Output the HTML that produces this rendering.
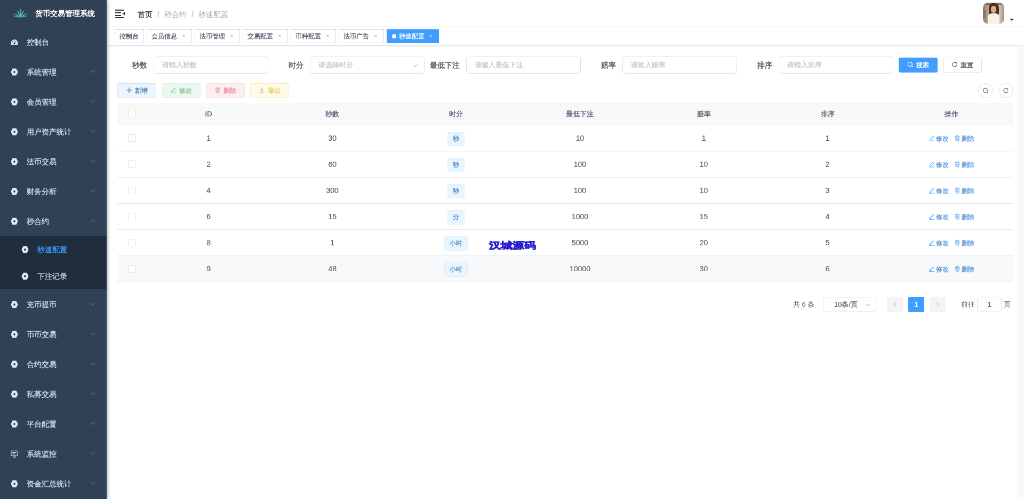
<!DOCTYPE html>
<html><head><meta charset="utf-8">
<style>
*{box-sizing:border-box;margin:0;padding:0}
html,body{width:1024px;height:499px;overflow:hidden;background:#fff}
body{font-family:"Liberation Sans",sans-serif;color:#606266}
#root{position:absolute;left:0;top:0;width:1920px;height:936px;transform:scale(0.533333);transform-origin:0 0;background:#fff;overflow:hidden;will-change:transform}
.abs{position:absolute}
/* sidebar */
#side{position:absolute;left:0;top:0;width:200px;height:936px;background:#304156;box-shadow:2px 0 6px rgba(0,21,41,.35);z-index:5}
.logo{position:absolute;left:0;top:0;width:200px;height:50px}
.logo svg{position:absolute;left:22px;top:9px}
.logo .t{position:absolute;left:66px;top:0;line-height:50px;font-size:14px;font-weight:bold;color:#fff;white-space:nowrap}
.mi{position:absolute;left:0;width:200px;height:56px;line-height:56px;font-size:14px;color:#bfcbd9;white-space:nowrap}
.mi .ic{position:absolute;left:20px;top:21.5px;width:14px;height:14px}
.mi .tx{position:absolute;left:50px;top:1px;color:#d0d8e2;-webkit-text-stroke:0.4px #d0d8e2}
.mi .ar{position:absolute;left:168px;top:22px;width:12px;height:12px}
.sub{position:absolute;left:0;width:200px;height:100px;background:#1f2d3d}
.si{position:absolute;left:0;width:200px;height:50px;line-height:50px;font-size:14px;color:#bfcbd9;white-space:nowrap}
.si .ic{position:absolute;left:40px;top:18.5px;width:14px;height:14px}
.si .tx{position:absolute;left:70px;top:1px;-webkit-text-stroke:0.35px currentColor}
/* navbar */
#nav{position:absolute;left:200px;top:0;width:1720px;height:51px;background:#fff;box-shadow:0 1px 4px rgba(0,21,41,.08);border-bottom:1px solid #f0f1f3}
.bc{position:absolute;left:58px;top:1.5px;line-height:50px;font-size:14px;white-space:nowrap}
.bc b{color:#303133;font-weight:normal;-webkit-text-stroke:0.15px #303133}
.bc .sep{color:#c0c4cc;margin:0 9px;font-weight:bold}
.bc .nr{color:#a0abba}
#tags{position:absolute;left:200px;top:51px;width:1720px;height:34px;background:#fff;border-bottom:1px solid #d8dce5;box-shadow:0 1px 3px 0 rgba(0,0,0,.12),0 0 3px 0 rgba(0,0,0,.04)}
.tag{position:absolute;top:4px;height:26px;line-height:24px;border:1px solid #d8dce5;color:#495060;background:#fff;padding:0 0 0 8px;font-size:12px;white-space:nowrap;-webkit-text-stroke:0.2px currentColor}
.tag .x{position:absolute;right:7px;top:0;width:16px;text-align:center;color:#a8abb2;font-size:8px;-webkit-text-stroke:0}
.tag.act{background:#409eff;color:#fff;border-color:#409eff}
.tag.act .dot{display:inline-block;width:8px;height:8px;border-radius:50%;background:#fff;margin-left:1px;margin-right:5px;position:relative;top:0px}
.tag.act .x{color:#d8ebff}
/* form */
.lbl{position:absolute;height:32px;line-height:32px;font-size:14px;color:#606266;font-weight:bold;text-align:right;white-space:nowrap}
.inp{position:absolute;height:32px;border:1px solid #dcdfe6;border-radius:4px;background:#fff;font-size:13px;line-height:30px;padding-left:15px;color:#c0c4cc;white-space:nowrap;-webkit-text-stroke:0.25px currentColor}
.btn{position:absolute;height:28px;border-radius:3px;font-size:12px;line-height:26px;text-align:center;white-space:nowrap;border:1px solid #dcdfe6;-webkit-text-stroke:0.3px currentColor}
/* table */
.th{position:absolute;top:193px;left:220px;width:1680px;height:42px;background:#f8f8f9;border-bottom:1px solid #e5eaef}
.row{position:absolute;left:220px;width:1680px;height:49px;border-bottom:1px solid #e5eaef}
.c{position:absolute;top:0;text-align:center;white-space:nowrap}
.th .c{line-height:41px;font-size:13px;color:#515a6e;font-weight:normal;-webkit-text-stroke:0.3px #515a6e}
.row .c{line-height:48px;font-size:14px;color:#606266;-webkit-text-stroke:0.2px #606266}
.cb{position:absolute;left:20px;width:14px;height:14px;border:1px solid #dcdfe6;border-radius:2px;background:#fff}
.etag{display:inline-block;height:27px;line-height:25px;padding:0 9px;font-size:12px;color:#4d88c0;background:#e9f4fd;border:1px solid #def0fc;border-radius:4px;vertical-align:middle;-webkit-text-stroke:0.3px #4d88c0}
.op{font-size:12px;color:#4f92d6;-webkit-text-stroke:0.25px #4f92d6}
</style></head><body>
<div id="root">
<!-- SIDEBAR -->
<div id="side">
  <div class="logo">
    <svg width="32" height="32" viewBox="0 0 32 32"><path fill="#50b8a2" d="M16.0 23.5 Q19.0 16.0 16.8 6.5 Q13.8 15.7 16.0 23.5Z M16.0 23.5 Q15.4 16.3 10.0 9.5 Q11.2 18.1 16.0 23.5Z M16.0 23.5 Q21.2 18.5 23.0 10.0 Q17.1 16.4 16.0 23.5Z M16.0 23.5 Q11.2 18.2 3.0 15.5 Q9.1 21.6 16.0 23.5Z M16.0 23.5 Q23.1 21.6 29.5 15.5 Q21.1 18.2 16.0 23.5Z M16.0 23.5 Q9.5 20.6 0.8 20.5 Q8.9 23.7 16.0 23.5Z M16.0 23.5 Q23.1 23.7 31.2 20.5 Q22.5 20.6 16.0 23.5Z"/></svg>
    <div class="t">货币交易管理系统</div>
  </div>
  <div id="menu"><div class="mi" style="top:50px"><svg class="ic" viewBox="0 0 14 14"><path fill="#d6dee9" d="M7 2 A6.5 6.5 0 0 0 0.5 8.5 L0.5 12 L13.5 12 L13.5 8.5 A6.5 6.5 0 0 0 7 2Z"/><circle cx="7" cy="10" r="1.4" fill="#304156"/><path stroke="#304156" stroke-width="1.2" d="M7 10 L9 5.5 M3 6 L4 7 M7 3.5 L7 5"/></svg><span class="tx">控制台</span></div><div class="mi" style="top:106px"><svg class="ic" viewBox="0 0 14 14"><path fill="#e6e9ee" fill-rule="evenodd" d="M0.4 7 L3.6 0.6 L10.4 0.6 L13.6 7 L10.4 13.4 L3.6 13.4Z M7 5.1 A1.9 1.9 0 1 0 7 8.9 A1.9 1.9 0 1 0 7 5.1Z"/></svg><span class="tx">系统管理</span><svg class="ar" viewBox="0 0 12 12"><path d="M2 4 L6 8 L10 4" fill="none" stroke="#5f6f86" stroke-width="1.1"/></svg></div><div class="mi" style="top:162px"><svg class="ic" viewBox="0 0 14 14"><path fill="#e6e9ee" fill-rule="evenodd" d="M0.4 7 L3.6 0.6 L10.4 0.6 L13.6 7 L10.4 13.4 L3.6 13.4Z M7 5.1 A1.9 1.9 0 1 0 7 8.9 A1.9 1.9 0 1 0 7 5.1Z"/></svg><span class="tx">会员管理</span><svg class="ar" viewBox="0 0 12 12"><path d="M2 4 L6 8 L10 4" fill="none" stroke="#5f6f86" stroke-width="1.1"/></svg></div><div class="mi" style="top:218px"><svg class="ic" viewBox="0 0 14 14"><path fill="#e6e9ee" fill-rule="evenodd" d="M0.4 7 L3.6 0.6 L10.4 0.6 L13.6 7 L10.4 13.4 L3.6 13.4Z M7 5.1 A1.9 1.9 0 1 0 7 8.9 A1.9 1.9 0 1 0 7 5.1Z"/></svg><span class="tx">用户资产统计</span><svg class="ar" viewBox="0 0 12 12"><path d="M2 4 L6 8 L10 4" fill="none" stroke="#5f6f86" stroke-width="1.1"/></svg></div><div class="mi" style="top:274px"><svg class="ic" viewBox="0 0 14 14"><path fill="#e6e9ee" fill-rule="evenodd" d="M0.4 7 L3.6 0.6 L10.4 0.6 L13.6 7 L10.4 13.4 L3.6 13.4Z M7 5.1 A1.9 1.9 0 1 0 7 8.9 A1.9 1.9 0 1 0 7 5.1Z"/></svg><span class="tx">法币交易</span><svg class="ar" viewBox="0 0 12 12"><path d="M2 4 L6 8 L10 4" fill="none" stroke="#5f6f86" stroke-width="1.1"/></svg></div><div class="mi" style="top:330px"><svg class="ic" viewBox="0 0 14 14"><path fill="#e6e9ee" fill-rule="evenodd" d="M0.4 7 L3.6 0.6 L10.4 0.6 L13.6 7 L10.4 13.4 L3.6 13.4Z M7 5.1 A1.9 1.9 0 1 0 7 8.9 A1.9 1.9 0 1 0 7 5.1Z"/></svg><span class="tx">财务分析</span><svg class="ar" viewBox="0 0 12 12"><path d="M2 4 L6 8 L10 4" fill="none" stroke="#5f6f86" stroke-width="1.1"/></svg></div><div class="mi" style="top:386px"><svg class="ic" viewBox="0 0 14 14"><path fill="#e6e9ee" fill-rule="evenodd" d="M0.4 7 L3.6 0.6 L10.4 0.6 L13.6 7 L10.4 13.4 L3.6 13.4Z M7 5.1 A1.9 1.9 0 1 0 7 8.9 A1.9 1.9 0 1 0 7 5.1Z"/></svg><span class="tx">秒合约</span><svg class="ar" viewBox="0 0 12 12"><path d="M2 8 L6 4 L10 8" fill="none" stroke="#5f6f86" stroke-width="1.1"/></svg></div><div class="sub" style="top:442px"><div class="si" style="top:0"><svg class="ic" viewBox="0 0 14 14"><path fill="#e6e9ee" fill-rule="evenodd" d="M0.4 7 L3.6 0.6 L10.4 0.6 L13.6 7 L10.4 13.4 L3.6 13.4Z M7 5.1 A1.9 1.9 0 1 0 7 8.9 A1.9 1.9 0 1 0 7 5.1Z"/></svg><span class="tx" style="color:#409eff">秒速配置</span></div><div class="si" style="top:50px"><svg class="ic" viewBox="0 0 14 14"><path fill="#e6e9ee" fill-rule="evenodd" d="M0.4 7 L3.6 0.6 L10.4 0.6 L13.6 7 L10.4 13.4 L3.6 13.4Z M7 5.1 A1.9 1.9 0 1 0 7 8.9 A1.9 1.9 0 1 0 7 5.1Z"/></svg><span class="tx">下注记录</span></div></div><div class="mi" style="top:542px"><svg class="ic" viewBox="0 0 14 14"><path fill="#e6e9ee" fill-rule="evenodd" d="M0.4 7 L3.6 0.6 L10.4 0.6 L13.6 7 L10.4 13.4 L3.6 13.4Z M7 5.1 A1.9 1.9 0 1 0 7 8.9 A1.9 1.9 0 1 0 7 5.1Z"/></svg><span class="tx">充币提币</span><svg class="ar" viewBox="0 0 12 12"><path d="M2 4 L6 8 L10 4" fill="none" stroke="#5f6f86" stroke-width="1.1"/></svg></div><div class="mi" style="top:598px"><svg class="ic" viewBox="0 0 14 14"><path fill="#e6e9ee" fill-rule="evenodd" d="M0.4 7 L3.6 0.6 L10.4 0.6 L13.6 7 L10.4 13.4 L3.6 13.4Z M7 5.1 A1.9 1.9 0 1 0 7 8.9 A1.9 1.9 0 1 0 7 5.1Z"/></svg><span class="tx">币币交易</span><svg class="ar" viewBox="0 0 12 12"><path d="M2 4 L6 8 L10 4" fill="none" stroke="#5f6f86" stroke-width="1.1"/></svg></div><div class="mi" style="top:654px"><svg class="ic" viewBox="0 0 14 14"><path fill="#e6e9ee" fill-rule="evenodd" d="M0.4 7 L3.6 0.6 L10.4 0.6 L13.6 7 L10.4 13.4 L3.6 13.4Z M7 5.1 A1.9 1.9 0 1 0 7 8.9 A1.9 1.9 0 1 0 7 5.1Z"/></svg><span class="tx">合约交易</span><svg class="ar" viewBox="0 0 12 12"><path d="M2 4 L6 8 L10 4" fill="none" stroke="#5f6f86" stroke-width="1.1"/></svg></div><div class="mi" style="top:710px"><svg class="ic" viewBox="0 0 14 14"><path fill="#e6e9ee" fill-rule="evenodd" d="M0.4 7 L3.6 0.6 L10.4 0.6 L13.6 7 L10.4 13.4 L3.6 13.4Z M7 5.1 A1.9 1.9 0 1 0 7 8.9 A1.9 1.9 0 1 0 7 5.1Z"/></svg><span class="tx">私募交易</span><svg class="ar" viewBox="0 0 12 12"><path d="M2 4 L6 8 L10 4" fill="none" stroke="#5f6f86" stroke-width="1.1"/></svg></div><div class="mi" style="top:766px"><svg class="ic" viewBox="0 0 14 14"><path fill="#e6e9ee" fill-rule="evenodd" d="M0.4 7 L3.6 0.6 L10.4 0.6 L13.6 7 L10.4 13.4 L3.6 13.4Z M7 5.1 A1.9 1.9 0 1 0 7 8.9 A1.9 1.9 0 1 0 7 5.1Z"/></svg><span class="tx">平台配置</span><svg class="ar" viewBox="0 0 12 12"><path d="M2 4 L6 8 L10 4" fill="none" stroke="#5f6f86" stroke-width="1.1"/></svg></div><div class="mi" style="top:822px"><svg class="ic" viewBox="0 0 14 14"><g fill="none" stroke="#bfcbd9" stroke-width="1.3"><rect x="1" y="1.5" width="12" height="8.5"/><path d="M4 13 L10 13 M7 10 L7 13 M3.5 4.5 L10.5 4.5 M3.5 7 L8 7"/></g></svg><span class="tx">系统监控</span><svg class="ar" viewBox="0 0 12 12"><path d="M2 4 L6 8 L10 4" fill="none" stroke="#5f6f86" stroke-width="1.1"/></svg></div><div class="mi" style="top:878px"><svg class="ic" viewBox="0 0 14 14"><path fill="#e6e9ee" fill-rule="evenodd" d="M0.4 7 L3.6 0.6 L10.4 0.6 L13.6 7 L10.4 13.4 L3.6 13.4Z M7 5.1 A1.9 1.9 0 1 0 7 8.9 A1.9 1.9 0 1 0 7 5.1Z"/></svg><span class="tx">资金汇总统计</span><svg class="ar" viewBox="0 0 12 12"><path d="M2 4 L6 8 L10 4" fill="none" stroke="#5f6f86" stroke-width="1.1"/></svg></div></div>
</div>
<!-- NAVBAR -->
<div id="nav">
  <svg class="abs" style="left:15px;top:15px" width="20" height="20" viewBox="0 0 20 20"><g fill="#303133"><rect x="1" y="3" width="16" height="2"/><rect x="1" y="8" width="11" height="2"/><rect x="1" y="13" width="11" height="2"/><rect x="1" y="17" width="16" height="2"/><path d="M19 7.5 L14.5 10.5 L19 13.5Z"/></g></svg>
  <div class="bc"><b>首页</b><span class="sep">/</span><span class="nr">秒合约</span><span class="sep">/</span><span class="nr">秒速配置</span></div>
  <div class="abs" style="left:1643px;top:5px;width:40px;height:40px;border-radius:10px;overflow:hidden;background:linear-gradient(90deg,#8c7b66 0%,#b3a38e 22%,#e9dfd2 50%,#ddd3c6 72%,#9d9282 100%)">
    <div class="abs" style="left:0;top:0;width:40px;height:4px;background:#6d5b48;opacity:.7"></div>
    <div class="abs" style="left:11px;top:1px;width:19px;height:23px;border-radius:8px 8px 4px 4px;background:#4d2f1c"></div>
    <div class="abs" style="left:15px;top:6px;width:10px;height:13px;border-radius:5px;background:#d9ad90"></div>
    <div class="abs" style="left:9px;top:20px;width:22px;height:22px;border-radius:8px 8px 0 0;background:#f7f1e8"></div>
    <div class="abs" style="left:0;top:14px;width:6px;height:14px;background:#7a6a58;opacity:.6"></div>
  </div>
  <div class="abs" style="left:1693px;top:35px;width:0;height:0;border-left:4px solid transparent;border-right:4px solid transparent;border-top:4.5px solid #303133"></div>
</div>
<!-- TAGS -->
<div id="tags">
  <div class="tag" style="left:15px;width:55px">控制台</div>
  <div class="tag" style="left:75px;width:85px">会员信息<span class="x">✕</span></div>
  <div class="tag" style="left:165px;width:85px">法币管理<span class="x">✕</span></div>
  <div class="tag" style="left:255px;width:85px">交易配置<span class="x">✕</span></div>
  <div class="tag" style="left:345px;width:85px">币种配置<span class="x">✕</span></div>
  <div class="tag" style="left:435px;width:85px">法币广告<span class="x">✕</span></div>
  <div class="tag act" style="left:525px;width:98px"><span class="dot"></span>秒速配置<span class="x">✕</span></div>
</div>
<!-- FORM -->
<div class="lbl" style="left:220px;top:106px;width:56px">秒数</div><div class="inp" style="left:288px;top:106px;width:215px">请输入秒数</div><div class="lbl" style="left:513px;top:106px;width:56px">时分</div><div class="inp" style="left:581px;top:106px;width:215px">请选择时分<svg class="abs" style="right:10px;top:10px" width="12" height="12" viewBox="0 0 12 12"><path d="M2 4 L6 8 L10 4" fill="none" stroke="#c0c4cc" stroke-width="1.2"/></svg></div><div class="lbl" style="left:806px;top:106px;width:56px">最低下注</div><div class="inp" style="left:874px;top:106px;width:215px">请输入最低下注</div><div class="lbl" style="left:1099px;top:106px;width:56px">赔率</div><div class="inp" style="left:1167px;top:106px;width:215px">请输入赔率</div><div class="lbl" style="left:1392px;top:106px;width:56px">排序</div><div class="inp" style="left:1460px;top:106px;width:215px">请输入排序</div><div class="btn" style="left:1685px;top:108px;width:73px;background:#409eff;border-color:#409eff;color:#fff"><svg width="12" height="12" viewBox="0 0 12 12" style="vertical-align:-1px;margin-right:5px"><circle cx="5.3" cy="5.3" r="4" fill="none" stroke="#fff" stroke-width="1.3"/><path d="M8.2 8.2 L11 11" stroke="#fff" stroke-width="1.3"/></svg>搜索</div><div class="btn" style="left:1768px;top:108px;width:73px;background:#fff;color:#606266"><svg width="12" height="12" viewBox="0 0 12 12" style="vertical-align:-1px;margin-right:5px"><path d="M10 6 A4 4 0 1 1 8.5 2.9" fill="none" stroke="#606266" stroke-width="1.3"/><path d="M7 1.2 L10.2 2 L9.4 5.2Z" fill="#606266"/></svg>重置</div><div class="btn" style="left:220px;top:156px;width:73px;background:#ecf5ff;border-color:#cfe3f5;color:#3d7db0"><svg width="12" height="12" viewBox="0 0 12 12" style="vertical-align:-1px;margin-right:5px"><path d="M6 1 L6 11 M1 6 L11 6" stroke="#556677" stroke-width="1.1"/></svg>新增</div><div class="btn" style="left:303px;top:156px;width:73px;background:#ebf8ef;border-color:#dcf1e3;color:#86c79b"><svg width="12" height="12" viewBox="0 0 12 12" style="vertical-align:-1px;margin-right:5px"><path d="M2 10 L2.5 8 L8.5 2 L10 3.5 L4 9.5Z M1 11.2 L11 11.2" fill="none" stroke="#86c79b" stroke-width="1"/></svg>修改</div><div class="btn" style="left:386px;top:156px;width:73px;background:#fdeeef;border-color:#f9dfe2;color:#e98a96"><svg width="12" height="12" viewBox="0 0 12 12" style="vertical-align:-1px;margin-right:5px"><path d="M1.5 3 L10.5 3 M4.5 3 L4.5 1.3 L7.5 1.3 L7.5 3 M2.8 3 L3.3 11 L8.7 11 L9.2 3 M5 5 L5 9 M7 5 L7 9" fill="none" stroke="#e98a96" stroke-width="1"/></svg>删除</div><div class="btn" style="left:469px;top:156px;width:73px;background:#fefae9;border-color:#f6ebc8;color:#e2c23a"><svg width="12" height="12" viewBox="0 0 12 12" style="vertical-align:-1px;margin-right:5px"><path d="M6 1 L6 8 M3 5 L6 8 L9 5 M1.5 11 L10.5 11" fill="none" stroke="#c9b97a" stroke-width="1.1"/></svg>导出</div><div class="btn" style="left:1834px;top:156px;width:28px;border-radius:50%;background:#fff"><svg width="12" height="12" viewBox="0 0 12 12" style="position:absolute;left:7px;top:7px"><circle cx="5.3" cy="5.3" r="4" fill="none" stroke="#606266" stroke-width="1.2"/><path d="M8.2 8.2 L11 11" stroke="#606266" stroke-width="1.2"/></svg></div><div class="btn" style="left:1872px;top:156px;width:28px;border-radius:50%;background:#fff"><svg width="12" height="12" viewBox="0 0 12 12" style="position:absolute;left:7px;top:7px"><path d="M10 6 A4 4 0 1 1 8.5 2.9" fill="none" stroke="#606266" stroke-width="1.2"/><path d="M7 1.2 L10.2 2 L9.4 5.2Z" fill="#606266"/></svg></div>
<!-- TABLE -->
<div class="th"><div class="cb" style="top:13px"></div><div class="c" style="left:55.00px;width:232.14px">ID</div><div class="c" style="left:287.14px;width:232.14px">秒数</div><div class="c" style="left:519.29px;width:232.14px">时分</div><div class="c" style="left:751.43px;width:232.14px">最低下注</div><div class="c" style="left:983.57px;width:232.14px">赔率</div><div class="c" style="left:1215.71px;width:232.14px">排序</div><div class="c" style="left:1447.86px;width:232.14px">操作</div></div>
<div class="row" style="top:235px;background:#fff"><div class="cb" style="top:17px"></div><div class="c" style="left:55.00px;width:232.14px">1</div><div class="c" style="left:287.14px;width:232.14px">30</div><div class="c" style="left:519.29px;width:232.14px"><span class="etag">秒</span></div><div class="c" style="left:751.43px;width:232.14px">10</div><div class="c" style="left:983.57px;width:232.14px">1</div><div class="c" style="left:1215.71px;width:232.14px">1</div><div class="c" style="left:1447.86px;width:232.14px"><span class="op"><svg width="12" height="12" viewBox="0 0 12 12" style="vertical-align:-1px;margin-right:2px"><path d="M2 10 L2.5 8 L8.5 2 L10 3.5 L4 9.5Z M1 11.2 L11 11.2" fill="none" stroke="#409eff" stroke-width="1"/></svg>修改</span><span class="op" style="margin-left:10px"><svg width="12" height="12" viewBox="0 0 12 12" style="vertical-align:-1px;margin-right:2px"><path d="M1.5 3 L10.5 3 M4.5 3 L4.5 1.3 L7.5 1.3 L7.5 3 M2.8 3 L3.3 11 L8.7 11 L9.2 3 M5 5 L5 9 M7 5 L7 9" fill="none" stroke="#409eff" stroke-width="1"/></svg>删除</span></div></div><div class="row" style="top:284px;background:#fff"><div class="cb" style="top:17px"></div><div class="c" style="left:55.00px;width:232.14px">2</div><div class="c" style="left:287.14px;width:232.14px">60</div><div class="c" style="left:519.29px;width:232.14px"><span class="etag">秒</span></div><div class="c" style="left:751.43px;width:232.14px">100</div><div class="c" style="left:983.57px;width:232.14px">10</div><div class="c" style="left:1215.71px;width:232.14px">2</div><div class="c" style="left:1447.86px;width:232.14px"><span class="op"><svg width="12" height="12" viewBox="0 0 12 12" style="vertical-align:-1px;margin-right:2px"><path d="M2 10 L2.5 8 L8.5 2 L10 3.5 L4 9.5Z M1 11.2 L11 11.2" fill="none" stroke="#409eff" stroke-width="1"/></svg>修改</span><span class="op" style="margin-left:10px"><svg width="12" height="12" viewBox="0 0 12 12" style="vertical-align:-1px;margin-right:2px"><path d="M1.5 3 L10.5 3 M4.5 3 L4.5 1.3 L7.5 1.3 L7.5 3 M2.8 3 L3.3 11 L8.7 11 L9.2 3 M5 5 L5 9 M7 5 L7 9" fill="none" stroke="#409eff" stroke-width="1"/></svg>删除</span></div></div><div class="row" style="top:333px;background:#fff"><div class="cb" style="top:17px"></div><div class="c" style="left:55.00px;width:232.14px">4</div><div class="c" style="left:287.14px;width:232.14px">300</div><div class="c" style="left:519.29px;width:232.14px"><span class="etag">秒</span></div><div class="c" style="left:751.43px;width:232.14px">100</div><div class="c" style="left:983.57px;width:232.14px">10</div><div class="c" style="left:1215.71px;width:232.14px">3</div><div class="c" style="left:1447.86px;width:232.14px"><span class="op"><svg width="12" height="12" viewBox="0 0 12 12" style="vertical-align:-1px;margin-right:2px"><path d="M2 10 L2.5 8 L8.5 2 L10 3.5 L4 9.5Z M1 11.2 L11 11.2" fill="none" stroke="#409eff" stroke-width="1"/></svg>修改</span><span class="op" style="margin-left:10px"><svg width="12" height="12" viewBox="0 0 12 12" style="vertical-align:-1px;margin-right:2px"><path d="M1.5 3 L10.5 3 M4.5 3 L4.5 1.3 L7.5 1.3 L7.5 3 M2.8 3 L3.3 11 L8.7 11 L9.2 3 M5 5 L5 9 M7 5 L7 9" fill="none" stroke="#409eff" stroke-width="1"/></svg>删除</span></div></div><div class="row" style="top:382px;background:#fff"><div class="cb" style="top:17px"></div><div class="c" style="left:55.00px;width:232.14px">6</div><div class="c" style="left:287.14px;width:232.14px">15</div><div class="c" style="left:519.29px;width:232.14px"><span class="etag">分</span></div><div class="c" style="left:751.43px;width:232.14px">1000</div><div class="c" style="left:983.57px;width:232.14px">15</div><div class="c" style="left:1215.71px;width:232.14px">4</div><div class="c" style="left:1447.86px;width:232.14px"><span class="op"><svg width="12" height="12" viewBox="0 0 12 12" style="vertical-align:-1px;margin-right:2px"><path d="M2 10 L2.5 8 L8.5 2 L10 3.5 L4 9.5Z M1 11.2 L11 11.2" fill="none" stroke="#409eff" stroke-width="1"/></svg>修改</span><span class="op" style="margin-left:10px"><svg width="12" height="12" viewBox="0 0 12 12" style="vertical-align:-1px;margin-right:2px"><path d="M1.5 3 L10.5 3 M4.5 3 L4.5 1.3 L7.5 1.3 L7.5 3 M2.8 3 L3.3 11 L8.7 11 L9.2 3 M5 5 L5 9 M7 5 L7 9" fill="none" stroke="#409eff" stroke-width="1"/></svg>删除</span></div></div><div class="row" style="top:431px;background:#fff"><div class="cb" style="top:17px"></div><div class="c" style="left:55.00px;width:232.14px">8</div><div class="c" style="left:287.14px;width:232.14px">1</div><div class="c" style="left:519.29px;width:232.14px"><span class="etag">小时</span></div><div class="c" style="left:751.43px;width:232.14px">5000</div><div class="c" style="left:983.57px;width:232.14px">20</div><div class="c" style="left:1215.71px;width:232.14px">5</div><div class="c" style="left:1447.86px;width:232.14px"><span class="op"><svg width="12" height="12" viewBox="0 0 12 12" style="vertical-align:-1px;margin-right:2px"><path d="M2 10 L2.5 8 L8.5 2 L10 3.5 L4 9.5Z M1 11.2 L11 11.2" fill="none" stroke="#409eff" stroke-width="1"/></svg>修改</span><span class="op" style="margin-left:10px"><svg width="12" height="12" viewBox="0 0 12 12" style="vertical-align:-1px;margin-right:2px"><path d="M1.5 3 L10.5 3 M4.5 3 L4.5 1.3 L7.5 1.3 L7.5 3 M2.8 3 L3.3 11 L8.7 11 L9.2 3 M5 5 L5 9 M7 5 L7 9" fill="none" stroke="#409eff" stroke-width="1"/></svg>删除</span></div></div><div class="row" style="top:480px;background:#f8f9fa"><div class="cb" style="top:17px"></div><div class="c" style="left:55.00px;width:232.14px">9</div><div class="c" style="left:287.14px;width:232.14px">48</div><div class="c" style="left:519.29px;width:232.14px"><span class="etag">小时</span></div><div class="c" style="left:751.43px;width:232.14px">10000</div><div class="c" style="left:983.57px;width:232.14px">30</div><div class="c" style="left:1215.71px;width:232.14px">6</div><div class="c" style="left:1447.86px;width:232.14px"><span class="op"><svg width="12" height="12" viewBox="0 0 12 12" style="vertical-align:-1px;margin-right:2px"><path d="M2 10 L2.5 8 L8.5 2 L10 3.5 L4 9.5Z M1 11.2 L11 11.2" fill="none" stroke="#409eff" stroke-width="1"/></svg>修改</span><span class="op" style="margin-left:10px"><svg width="12" height="12" viewBox="0 0 12 12" style="vertical-align:-1px;margin-right:2px"><path d="M1.5 3 L10.5 3 M4.5 3 L4.5 1.3 L7.5 1.3 L7.5 3 M2.8 3 L3.3 11 L8.7 11 L9.2 3 M5 5 L5 9 M7 5 L7 9" fill="none" stroke="#409eff" stroke-width="1"/></svg>删除</span></div></div>
<div class="abs" style="left:1908px;top:85px;width:12px;height:851px;background:#f8f8f8"></div>
<!-- PAGINATION -->
<div class="abs" style="left:1487px;top:558px;line-height:26px;font-size:13px;color:#606266;white-space:nowrap">共 6 条</div><div class="inp" style="left:1543px;top:558px;width:100px;height:26px;line-height:24px;font-size:13px;color:#606266;padding-left:20px">10条/页<svg class="abs" style="right:8px;top:7px" width="12" height="12" viewBox="0 0 12 12"><path d="M2 4 L6 8 L10 4" fill="none" stroke="#c0c4cc" stroke-width="1.2"/></svg></div><div class="abs" style="left:1663px;top:557px;width:30px;height:28px;background:#f4f4f5;border-radius:2px"><svg class="abs" style="left:9px;top:8px" width="12" height="12" viewBox="0 0 12 12"><path d="M8 2 L4 6 L8 10" fill="none" stroke="#c0c4cc" stroke-width="1.3"/></svg></div><div class="abs" style="left:1703px;top:557px;width:30px;height:28px;background:#409eff;border-radius:2px;color:#fff;font-size:13px;font-weight:bold;line-height:28px;text-align:center">1</div><div class="abs" style="left:1743px;top:557px;width:30px;height:28px;background:#f4f4f5;border-radius:2px"><svg class="abs" style="left:9px;top:8px" width="12" height="12" viewBox="0 0 12 12"><path d="M4 2 L8 6 L4 10" fill="none" stroke="#c0c4cc" stroke-width="1.3"/></svg></div><div class="abs" style="left:1802px;top:558px;line-height:26px;font-size:13px;color:#606266;white-space:nowrap">前往</div><div class="inp" style="left:1832px;top:558px;width:46px;height:26px;line-height:24px;font-size:13px;color:#606266;padding:0;text-align:center">1</div><div class="abs" style="left:1882px;top:558px;line-height:26px;font-size:13px;color:#606266;white-space:nowrap">页</div>
<div class="abs" style="left:917px;top:452px;font-size:22px;line-height:22px;font-weight:bold;color:#2c22cc;white-space:nowrap;transform:scaleY(0.78);transform-origin:0 0;-webkit-text-stroke:1.4px #2a20d0">汉城源码</div>
</div>
</body></html>
